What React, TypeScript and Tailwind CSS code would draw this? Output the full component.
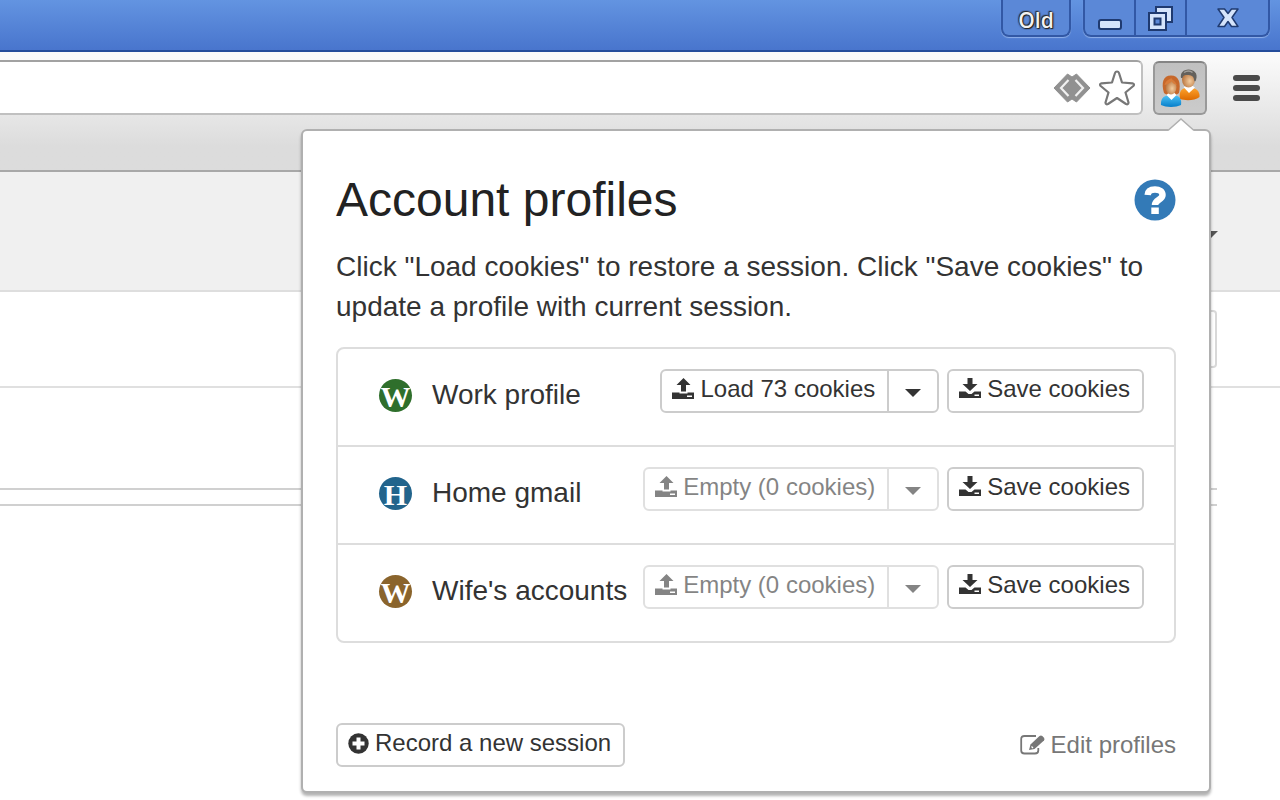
import React from "react";

const profiles = [
  { id: 1, name: "Work profile", letter: "W", color: "bg-[#2f6f2c]", cookies: 73 },
  { id: 2, name: "Home gmail", letter: "H", color: "bg-[#22648c]", cookies: 0 },
  { id: 3, name: "Wife's accounts", letter: "W", color: "bg-[#8a642c]", cookies: 0 },
];

const UploadIcon = () => (
  <svg width="22" height="22" viewBox="0 0 22 22" fill="currentColor" aria-hidden="true" className="shrink-0">
    <path d="M11.500 0l7 7H14v6.500H9V7H4.500z" />
    <path d="M0 14.500h7.500v1h8v-1H22v6.500H0zM15 17.500V19h5v-1.500z" fillRule="evenodd" />
  </svg>
);

const DownloadIcon = () => (
  <svg width="22" height="22" viewBox="0 0 22 22" fill="currentColor" aria-hidden="true" className="shrink-0">
    <path d="M8.500 0h5v6H18.500L11 13 3.500 6h5z" />
    <path d="M0 13.500h6.500L9.500 16h3l3-2.500H22V20H0zM15.500 16.500V18H20v-1.500z" fillRule="evenodd" />
  </svg>
);

const PlusIcon = () => (
  <svg width="21" height="21" viewBox="0 0 21 21" aria-hidden="true" className="shrink-0">
    <circle cx="10.500" cy="10.500" r="10.200" fill="currentColor" />
    <path d="M8.500 4.500h4v4h4v4h-4v4h-4v-4h-4v-4h4z" fill="#fff" />
  </svg>
);

const EditIcon = () => (
  <svg width="25" height="22" viewBox="0 0 25 22" aria-hidden="true" className="shrink-0">
    <path d="M16 2H4.500Q1.200 2 1.200 5v11.500q0 3 3.300 3H15q3.300 0 3.300-3V14" fill="none" stroke="currentColor" strokeWidth="1.800" />
    <path d="M9 16l1.500-5.500L19.500 2q1.500-1.200 2.800 0l1.700 1.700q1 1.400 0 2.800L14.500 15z" fill="currentColor" />
    <path d="M11.500 12.500l1.500 1.500" stroke="#fff" strokeWidth="1.200" />
  </svg>
);

const HelpIcon = () => (
  <svg width="42" height="42" viewBox="0 0 42 42" aria-hidden="true">
    <circle cx="21" cy="21" r="20.500" fill="#337ab7" />
    <path d="M13.700 16c.2-4 3.100-5.500 7.300-5.500 4.400 0 7.500 2 7.500 5.500 0 5-7.500 4.500-7.500 10" fill="none" stroke="#fff" strokeWidth="6.500" />
    <path d="M17.300 28.500h7.500V35h-7.500z" fill="#fff" />
  </svg>
);

const Caret = () => (
  <svg width="16" height="8" viewBox="0 0 16 8" fill="currentColor" aria-hidden="true">
    <path d="M0 0h16L8 8z" />
  </svg>
);

const PeopleIcon = () => (
  <svg width="40" height="38" viewBox="0 0 40 38" aria-hidden="true">
    <defs>
      <radialGradient id="face" cx="60%" cy="60%" r="60%">
        <stop offset="0" stopColor="#f3cda0" />
        <stop offset="1" stopColor="#b8733c" />
      </radialGradient>
      <linearGradient id="orange" x1="0" y1="0" x2="0" y2="1">
        <stop offset="0" stopColor="#ffa52e" />
        <stop offset="1" stopColor="#dd6a00" />
      </linearGradient>
      <linearGradient id="blue" x1="0" y1="0" x2="0" y2="1">
        <stop offset="0" stopColor="#4fc4f7" />
        <stop offset="1" stopColor="#087fca" />
      </linearGradient>
    </defs>
    <path d="M20 30c-1.500-8 2-11.500 9-11.500S40 22 39.500 28C35 31.500 26 32 20 30z" fill="url(#orange)" />
    <path d="M23.500 18l5.500 6 6-5.500-3-2h-5z" fill="#fff" />
    <ellipse cx="28.500" cy="10.500" rx="6.500" ry="8" fill="url(#face)" />
    <path d="M21 9C20 4 23.500.5 28.500.5s10 3.500 7.500 10.500c-.5 2-1.800 2-2-.5-.5-3.500-3-4.500-6.500-4.500-3 0-4.500.5-5 3z" fill="#64615c" />
    <path d="M24 3.500c3-2 6-2 8.500 0" fill="none" stroke="#a3a09b" strokeWidth="1.500" />
    <path d="M4 24C1 14 3 6.500 11 6.500S21 14 19 24c-3 3-12 3-15 0z" fill="#c7682b" />
    <path d="M1 36c-.5-7 3-10 10.500-10S22 29 21 36c-5 2.500-15 2.500-20 0z" fill="url(#blue)" />
    <path d="M6.500 26l5 5 5-5-2-2h-6z" fill="#fff" />
    <ellipse cx="11" cy="18" rx="5.500" ry="7.500" fill="url(#face)" />
    <path d="M4.500 16c1-5 6-6 7-7 1 3 4 3.500 5.500 7-3-1-4.500-2-5.500-4-1.500 2-3.500 3.500-7 4z" fill="#d97c3a" />
  </svg>
);

const TitleBar = () => (
  <div className="flex h-[52px] items-start justify-end gap-3 border-b-2 border-[#244c9b] bg-linear-to-b from-[#6394e1] to-[#4975cd] pr-[10px]">
    <button className="h-[37px] w-[70px] rounded-b-lg border-2 border-t-0 border-[#3258a5] bg-[#5b88d7] pt-1 font-['Open_Sans',sans-serif] text-[21px] leading-8 font-semibold text-[#f2f2f2] shadow-[0_1px_1px_#8fb1ea] [text-shadow:0_0_2px_#222,0_0_2px_#222,1px_1px_1px_#222,-1px_-1px_1px_#333]">
      Old
    </button>
    <div className="flex h-[37px] divide-x-2 divide-[#3258a5] rounded-b-lg border-2 border-t-0 border-[#3258a5] bg-[#5b88d7] shadow-[0_1px_1px_#8fb1ea]">
      <button aria-label="Minimize" className="flex w-[51px] items-center justify-center">
        <svg width="26" height="28" viewBox="0 0 26 28">
          <rect x="2" y="16" width="22" height="9" rx="2" fill="#d5e4fb" stroke="#1f3a70" strokeWidth="2" />
        </svg>
      </button>
      <button aria-label="Restore" className="flex w-[51px] items-center justify-center">
        <svg width="28" height="28" viewBox="0 0 28 28" fill="#d5e4fb" stroke="#1f3a70" strokeWidth="2">
          <path d="M9 3h16v15H9z" />
          <path d="M2 9h17v17H2z" />
          <path d="M7.500 14.500h6v6h-6z" fill="#5b88d7" />
        </svg>
      </button>
      <button aria-label="Close" className="flex w-[81px] items-center justify-center">
        <svg width="24" height="24" viewBox="0 0 24 24">
          <path d="M2 3h6.500L12 7.500 15.500 3H22l-6 8.500 6 9h-6.500L12 15.500l-3.500 5H2l6-9z" fill="#d5e4fb" stroke="#1f3a70" strokeWidth="1.500" strokeLinejoin="round" />
        </svg>
      </button>
    </div>
  </div>
);

const Toolbar = () => (
  <div className="h-[120px] border-b-2 border-[#a8a8a8] bg-linear-to-b from-[#fafafa] from-5% to-[#dcdcdc] to-80% pt-2">
    <div className="flex items-center">
      <div className="flex h-[55px] flex-1 items-center gap-2 rounded-r-md border-2 border-l-0 border-[#c0c0c0] border-t-[#a2a2a2] bg-white pr-[6px]">
        <input type="text" aria-label="Address" className="h-full min-w-0 flex-1 px-3 text-2xl outline-none" />
        <button aria-label="Translate">
          <svg width="38" height="32" viewBox="0 0 38 32">
            <path d="M14.500 2l4.500 3 4.500-3L37 16 23.500 30 19 27l-4.500 3L1 16z" fill="#919191" stroke="#919191" strokeLinejoin="round" />
            <path d="M15.500 8L8 16l7.500 8M22.500 8l7.500 8-7.500 8" fill="none" stroke="#f0f0f0" strokeWidth="2.200" />
          </svg>
        </button>
        <button aria-label="Bookmark">
          <svg width="36" height="36" viewBox="0 0 36 36">
            <path d="M18 1.500q1.500 0 2 1.500l3 9.500 10.500.8q2.500.7.8 2.700L26.500 22.500 29.500 32.500q-.3 2.500-2.500 1.500l-9-6-9 6q-2.200 1-2.500-1.500l3-10L1.700 16q-1.700-2 .8-2.700L13 12.500 16 3q.5-1.500 2-1.500z" fill="#fff" stroke="#777" strokeWidth="2.200" strokeLinejoin="round" />
          </svg>
        </button>
      </div>
      <button aria-label="Account profiles" className="ml-[10px] flex h-[54px] w-[54px] items-center justify-center rounded-md border-2 border-[#999] border-t-[#858585] bg-linear-to-b from-[#c0c0c0] to-[#cbcbcb]">
        <PeopleIcon />
      </button>
      <button aria-label="Menu" className="mr-5 ml-[26px]">
        <svg width="27" height="28" viewBox="0 0 27 28" fill="#4a4a4a">
          <rect y="1" width="27" height="6" rx="3" />
          <rect y="11" width="27" height="6" rx="3" />
          <rect y="21" width="27" height="6" rx="3" />
        </svg>
      </button>
    </div>
  </div>
);

const PageBehind = () => (
  <div>
    <div className="flex h-[120px] items-center justify-end border-b-2 border-[#dedede] bg-[#f0f0f0] pt-2 pr-[62px] text-[#555]">
      <Caret />
    </div>
    <div className="flex h-24 items-center justify-end border-b-2 border-[#e0e0e0] pr-[63px]">
      <div className="h-[58px] w-24 rounded-sm border-2 border-[#d8d8d8]" />
    </div>
    <div className="mr-[63px] h-[102px] border-b-2 border-[#d0d0d0]" />
    <div className="mr-[63px] h-4 border-b-2 border-[#d0d0d0]" />
  </div>
);

const buttonStyle = "flex h-11 items-center gap-[6px] border-2 bg-white pr-3 pl-[10px] pb-1 text-2xl whitespace-nowrap";

const App = () => {
  return (
    <div className="relative min-h-screen overflow-hidden bg-white font-['Liberation_Sans',Arial,sans-serif] text-[#333]">
      <TitleBar />
      <Toolbar />
      <PageBehind />

      <div className="absolute top-[129px] right-[69px] w-[910px] max-w-full rounded-md border-2 border-[#b0b0b0] bg-white px-[33px] pt-11 pb-6 shadow-[0_3px_3px_rgba(0,0,0,0.3)]">
        <svg width="28" height="14" viewBox="0 0 28 14" className="absolute -top-[13px] right-[14px]" aria-hidden="true">
          <path d="M1 12.500L14 1l13 11.500V14H1z" fill="#fff" />
          <path d="M1 12.500L14 1l13 11.500" fill="none" stroke="#b0b0b0" strokeWidth="1.500" />
        </svg>

        <div className="flex items-center justify-between">
          <h1 className="text-5xl leading-[50px] text-[#222]">Account profiles</h1>
          <button aria-label="Help">
            <HelpIcon />
          </button>
        </div>
        <p className="mt-[22px] text-[28px] leading-10">
          Click "Load cookies" to restore a session. Click "Save cookies" to update a profile with current session.
        </p>

        <ul className="mt-5 divide-y-2 divide-[#ddd] rounded-lg border-2 border-[#ddd]">
          {profiles.map((profile) => (
            <li key={profile.id} className="flex h-[98px] items-start justify-between pt-5 pr-[30px] pl-[41px] last:h-24">
              <div className="flex items-center gap-5 pt-1">
                <span className={`flex h-[33px] w-[33px] items-center justify-center overflow-hidden rounded-full pt-1 font-['Liberation_Serif',serif] text-[30px] leading-none font-bold text-white ${profile.color}`}>
                  {profile.letter}
                </span>
                <span className="text-[28px] leading-11 whitespace-nowrap">{profile.name}</span>
              </div>
              <div className="flex gap-2">
                <div className={profile.cookies > 0 ? "flex" : "flex opacity-60"}>
                  <button disabled={profile.cookies === 0} className={`${buttonStyle} rounded-l-md border-[#ccc]`}>
                    <UploadIcon />
                    {profile.cookies > 0 ? `Load ${profile.cookies} cookies` : "Empty (0 cookies)"}
                  </button>
                  <button
                    disabled={profile.cookies === 0}
                    aria-label={`More options for ${profile.name}`}
                    className="-ml-[2px] flex h-11 w-[52px] items-center justify-center rounded-r-md border-2 border-[#ccc] bg-white pt-1"
                  >
                    <Caret />
                  </button>
                </div>
                <button className={`${buttonStyle} rounded-md border-[#ccc]`}>
                  <DownloadIcon />
                  Save cookies
                </button>
              </div>
            </li>
          ))}
        </ul>

        <div className="mt-20 flex items-center justify-between">
          <button className={`${buttonStyle} rounded-md border-[#ccc]`}>
            <PlusIcon />
            Record a new session
          </button>
          <a href="#" className="flex items-center gap-[6px] text-2xl text-[#777]">
            <EditIcon />
            Edit profiles
          </a>
        </div>
      </div>
    </div>
  );
};

export default App;
